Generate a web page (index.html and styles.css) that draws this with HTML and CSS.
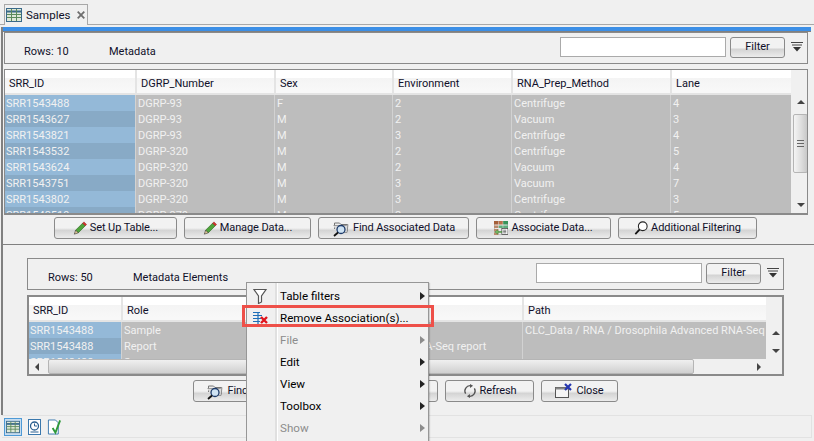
FILE: index.html
```html
<!DOCTYPE html>
<html lang="en">
<head>
<meta charset="utf-8">
<title>Samples</title>
<link rel="stylesheet" href="styles.css">
</head>
<body>
<svg class="defs" width="0" height="0" aria-hidden="true">
  <defs>
    <symbol id="pencil" viewBox="0 0 16 16">
      <path d="M3 10.500 11 2.500l3 3-8 8z" fill="#4fa53a" stroke="#2c6b22" stroke-width=".8"/>
      <path d="M11 2.500l1.500-1.500 3 3L14 5.500z" fill="#d8322a" stroke="#8b1f1a" stroke-width=".6"/>
      <path d="M3 10.500 1.500 15 6 13.500z" fill="#e9cf9c" stroke="#333" stroke-width=".7"/>
    </symbol>
    <symbol id="findfolder" viewBox="0 0 18 18">
      <path d="M2.500 10V4h5l1.500 1.500h6.500V12H11" fill="#eeeeee" stroke="#777"/>
      <path d="M1.500 6.500h13l1.500-1-1 8H5" fill="#dcdcdc" stroke="#888" stroke-width=".8"/>
      <circle cx="9" cy="10.500" r="4" fill="#cfe3f3" stroke="#1d3b6a" stroke-width="1.300"/>
      <path d="M6 13.500 2 17" stroke="#111" stroke-width="1.800"/>
    </symbol>
    <symbol id="assoc" viewBox="0 0 16 16">
      <rect x="0" y="0" width="16" height="16" fill="#e8e8e8" stroke="#666" stroke-width=".6"/>
      <path d="M0 0h5v4H0z" fill="#a5603a"/><path d="M5.500 0H10v4H5.500z" fill="#b8704a"/><path d="M10.500 0H16v4h-5.500z" fill="#39935a"/>
      <path d="M0 5h5v3H0zM0 9h5v3H0zM0 13h5v3H0z" fill="#b98a6c"/><path d="M5.500 5H10v3H5.500zM10.500 5H16v3h-5.500z" fill="#5fae7d"/>
      <rect x="9" y="8.500" width="7" height="7" fill="#fff" stroke="#333" stroke-width=".8"/>
      <path d="M10.500 10.500h3.500M10.500 12h3.500M10.500 13.500h3.500" stroke="#333" stroke-width=".7"/>
      <path d="M9 12H4.500V10L1 12.500 4.500 15v-2H9z" fill="#7cc36b" stroke="#3a7a30" stroke-width=".6"/>
    </symbol>
    <symbol id="lens" viewBox="0 0 16 16">
      <circle cx="10" cy="6" r="5" fill="#fff" stroke="#222" stroke-width="1.200"/>
      <path d="M6.500 9.500 1.500 15" stroke="#111" stroke-width="2"/>
    </symbol>
    <symbol id="refresh" viewBox="0 0 16 16">
      <path d="M3 11A6 6 0 0 1 9 2" fill="none" stroke="#555" stroke-width="1.500"/>
      <path d="M13 5A6 6 0 0 1 7 14" fill="none" stroke="#555" stroke-width="1.500"/>
      <path d="M8 0l3.500 2L8 4.500zM8 11.500 4.500 14 8 16z" fill="#555"/>
    </symbol>
    <symbol id="closewin" viewBox="0 0 18 16">
      <rect x=".5" y="4.500" width="13" height="10" fill="#f4f4f4" stroke="#555"/>
      <path d="M.5 4.500h13v2H.5z" fill="#888"/>
      <path d="M10 1l6 6M16 1l-6 6" stroke="#2536b0" stroke-width="2.200"/>
    </symbol>
    <symbol id="filtermenu" viewBox="0 0 12 10">
      <path d="M0 .5h12M1 3h10" stroke="#444" stroke-width="1"/>
      <path d="M2 5h8L6 9.500z" fill="#333"/>
    </symbol>
    <symbol id="tableicon" viewBox="0 0 16 14">
      <rect x=".5" y=".5" width="15" height="13" fill="#dfe8d8" stroke="#3a6a8a"/>
      <path d="M.5 3.500h15" stroke="#3a6a8a" stroke-width="2"/>
      <path d="M5.500 1v12M10.500 1v12M1 6.500h14M1 9.500h14" stroke="#5b8a5b"/>
    </symbol>
  </defs>
</svg>

<div class="tabstrip">
  <div class="tab">
    <svg class="ic-tab"><use href="#tableicon"/></svg>
    <span>Samples</span>
    <svg class="tab-x" viewBox="0 0 8 8"><path d="M.7.7l6.600 6.600M7.300.7.700 7.300" stroke="#6e6e6e" stroke-width="1.800"/></svg>
  </div>
</div>

<div class="panel">
  <div class="bluebar"></div>

  <section class="upper">
    <div class="headbox">
      <span class="rows">Rows: 10</span>
      <span class="meta">Metadata</span>
      <input class="filter-input" type="text">
      <button class="fbtn">Filter</button>
      <svg class="fmenu"><use href="#filtermenu"/></svg>
    </div>
    <div class="tablebox top-table">
      <div class="grid-area">
        <div class="row head"><div>SRR_ID</div><div>DGRP_Number</div><div>Sex</div><div>Environment</div><div>RNA_Prep_Method</div><div>Lane</div></div>
        <div class="row"><div>SRR1543488</div><div>DGRP-93</div><div>F</div><div>2</div><div>Centrifuge</div><div>4</div></div>
        <div class="row alt"><div>SRR1543627</div><div>DGRP-93</div><div>M</div><div>2</div><div>Vacuum</div><div>3</div></div>
        <div class="row"><div>SRR1543821</div><div>DGRP-93</div><div>M</div><div>3</div><div>Centrifuge</div><div>4</div></div>
        <div class="row alt"><div>SRR1543532</div><div>DGRP-320</div><div>M</div><div>2</div><div>Centrifuge</div><div>5</div></div>
        <div class="row"><div>SRR1543624</div><div>DGRP-320</div><div>M</div><div>2</div><div>Vacuum</div><div>4</div></div>
        <div class="row alt"><div>SRR1543751</div><div>DGRP-320</div><div>M</div><div>3</div><div>Vacuum</div><div>7</div></div>
        <div class="row"><div>SRR1543802</div><div>DGRP-320</div><div>M</div><div>3</div><div>Centrifuge</div><div>3</div></div>
        <div class="row alt"><div>SRR1543519</div><div>DGRP-370</div><div>M</div><div>2</div><div>Centrifuge</div><div>5</div></div>
      </div>
      <div class="vscroll">
        <span class="arrow up"></span>
        <span class="thumb"><i></i></span>
        <span class="arrow down"></span>
      </div>
    </div>
  </section>

  <div class="btnrow upper-btns">
    <button class="btn w1"><svg class="ic"><use href="#pencil"/></svg>Set Up Table...</button>
    <button class="btn w2"><svg class="ic"><use href="#pencil"/></svg>Manage Data...</button>
    <button class="btn w3"><svg class="ic ic-lg"><use href="#findfolder"/></svg>Find Associated Data</button>
    <button class="btn w4"><svg class="ic"><use href="#assoc"/></svg>Associate Data...</button>
    <button class="btn w5"><svg class="ic"><use href="#lens"/></svg>Additional Filtering</button>
  </div>

  <div class="separator"></div>

  <section class="lower">
    <div class="headbox lower-head">
      <span class="rows">Rows: 50</span>
      <span class="meta">Metadata Elements</span>
      <input class="filter-input" type="text">
      <button class="fbtn">Filter</button>
      <svg class="fmenu"><use href="#filtermenu"/></svg>
    </div>
    <div class="tablebox low-table">
      <div class="low-main">
        <div class="grid-area low-grid">
          <div class="row head"><div>SRR_ID</div><div>Role</div><div>Name</div><div>Path</div></div>
          <div class="row"><div>SRR1543488</div><div>Sample</div><div></div><div>CLC_Data / RNA / Drosophila Advanced RNA-Seq / Samples</div></div>
          <div class="row alt"><div>SRR1543488</div><div>Report</div><div>Drosophila Advanced RNA-Seq report</div><div></div></div>
          <div class="row"><div>SRR1543488</div><div>Sequence</div><div></div><div></div></div>
        </div>
        <div class="vscroll low-v">
          <span class="arrow up"></span>
          <span class="arrow down"></span>
        </div>
      </div>
      <div class="hscroll">
        <span class="arrow left"></span>
        <span class="hthumb"></span>
        <span class="arrow right"></span>
      </div>
    </div>
  </section>

  <div class="btnrow lower-btns">
    <button class="btn w6"><svg class="ic ic-lg"><use href="#findfolder"/></svg>Find Associated Data</button>
    <button class="btn w7">Remove</button>
    <button class="btn w8"><svg class="ic"><use href="#refresh"/></svg>Refresh</button>
    <button class="btn w9"><svg class="ic ic-wide"><use href="#closewin"/></svg>Close</button>
  </div>
</div>

<footer class="viewbar">
  <span class="vb-btn active"><svg class="vb-ic"><use href="#tableicon"/></svg></span>
  <svg class="vb-ic" viewBox="0 0 14 16"><rect x="1" y=".5" width="12" height="15" fill="#fff" stroke="#3a78ad"/><circle cx="7" cy="7" r="4" fill="none" stroke="#2a5f8f" stroke-width="1.300"/><path d="M7 4.500V7h2.500M3 13h8" stroke="#2a5f8f" fill="none"/></svg>
  <svg class="vb-ic" viewBox="0 0 16 16"><path d="M1.500.5H9l3 3V15.500H1.500z" fill="#fff" stroke="#3a78ad"/><path d="M6 9l3 5 5-13" fill="none" stroke="#2f9a3a" stroke-width="2"/></svg>
</footer>

<div class="menu">
  <div class="menu-item"><svg class="mi-ic" viewBox="0 0 16 16"><path d="M2 1.500h12L9.500 8v6l-3 1.500V8z" fill="#fff" stroke="#555" stroke-width="1.200"/></svg><span>Table filters</span><b class="sub"></b></div>
  <div class="menu-item"><svg class="mi-ic" viewBox="0 0 16 16"><path d="M1 2.500h7M1 5.500h9M1 8.500h8M1 11.500h7M1 14.500h7M6 2v13" stroke="#1f6fb8" stroke-width="1.200" fill="none"/><path d="M9 7l6 6M15 7l-6 6" stroke="#e0141c" stroke-width="2.400"/></svg><span>Remove Association(s)...</span></div>
  <div class="menu-item off"><i class="mi-ic"></i><span>File</span><b class="sub"></b></div>
  <div class="menu-item"><i class="mi-ic"></i><span>Edit</span><b class="sub"></b></div>
  <div class="menu-item"><i class="mi-ic"></i><span>View</span><b class="sub"></b></div>
  <div class="menu-item"><i class="mi-ic"></i><span>Toolbox</span><b class="sub"></b></div>
  <div class="menu-item off"><i class="mi-ic"></i><span>Show</span><b class="sub"></b></div>
</div>
<div class="highlight"></div>
</body>
</html>
```

FILE: styles.css
```css
* { box-sizing: border-box; }
html, body { margin: 0; height: 441px; overflow: hidden; }
body {
  position: relative;
  background: #f0f0f0;
  font-family: Roboto, "Noto Sans", sans-serif;
  font-size: 11px;
  line-height: 16px;
  color: #10102a;
}
.defs { position: absolute; }

.tabstrip { height: 25px; padding: 4px 0 0 4px; border-bottom: 1px solid #a8a8a8; }
.tab {
  width: 84px; height: 21px; display: flex; align-items: center; padding: 0 0 1px 1px;
  border: 1px solid #a8a8a8; border-bottom: 0; background: #f0f0f0; font-size: 11.500px;
}
.ic-tab { width: 16px; height: 14px; margin-right: 4px; flex: none; }
.tab-x { width: 8px; height: 8px; margin-left: 7px; flex: none; }

.panel { margin: 2px 0 0 1px; width: 810px; height: 388px; border-left: 2px solid #808080; }
.bluebar { height: 5px; background: #3c8fe6; border-bottom: 1px solid #808080; border-top: 1px solid #3c8fe6; }
.upper { margin-left: 1px; width: 804px; }

.headbox {
  height: 32px; display: flex; align-items: center; padding: 7px 0 0 19px;
  border: 1px solid #8a8a8a; background: #f0f0f0;
}
.rows { width: 85px; }
.meta { flex: 1; }
.filter-input { width: 166px; height: 20px; margin: -9px 0 0; border: 1px solid #aaa; background: #fff; padding: 0; }
.fbtn {
  width: 55px; height: 21px; margin: -9px 0 0 4px; padding: 0; font: inherit; color: inherit;
  border: 1px solid #8a8a8a; border-radius: 3px; background: linear-gradient(#f2f2f2 50%, #d4d4d4 60%, #ececec);
}
.fmenu { width: 12px; height: 10px; margin: -9px 4px 0 6px; flex: none; }

.tablebox { background: #f0f0f0; border: 1px solid #8a8a8a; border-bottom-width: 2px; }
.top-table { margin-top: 5px; height: 146px; display: flex; overflow: hidden; }
.grid-area { width: 786px; overflow: hidden; flex: none; }
.top-table .row { grid-template-columns: 130px 139px 118px 119px 159px 121px; }
.row { display: grid; height: 16px; }
.row > div {
  background: #bdbdbd; color: #f1f1f1; padding: 1px 0 0 2px; white-space: nowrap; overflow: hidden;
  border-left: 1px solid #d2d2d2; line-height: 15px;
}
.row > div:first-child { background: #94b9d8; border-left: 0; padding-left: 1px; }
.row.alt > div:first-child { background: #88aac6; }
.row.head { height: 25px; }
.row.head > div, .row.head > div:first-child {
  background: linear-gradient(#fff 35%, #f4f4f4 35%, #f8f8f8 90%);
  color: #10102a; padding: 6px 0 0 4px; border-left: 2px solid #e4e4e4; border-bottom: 2px solid #e4e4e4;
}
.row.head > div:first-child { border-left: 0; }

.vscroll { flex: 1; position: relative; background: #f0f0f0; }
.arrow { position: absolute; width: 0; height: 0; border: 4px solid transparent; }
.arrow.up { left: 6px; top: 30px; border-bottom-color: #444; border-top-width: 0; }
.arrow.down { left: 6px; bottom: 6px; border-top-color: #444; border-bottom-width: 0; }
.thumb {
  position: absolute; left: 2px; top: 44px; width: 15px; height: 59px;
  border: 1px solid #b5b5b5; border-radius: 2px;
  background: linear-gradient(90deg, #f4f4f4, #dcdcdc 60%, #c8c8c8);
  display: flex; align-items: center; justify-content: center;
}
.thumb i { width: 7px; height: 7px; border-top: 1px solid #666; border-bottom: 1px solid #666; background: linear-gradient(transparent 40%, #666 40%, #666 60%, transparent 60%); }

.btnrow { display: flex; gap: 7px; height: 22px; }
.upper-btns { margin-top: 2px; padding-left: 51px; }
.btn {
  height: 22px; padding: 0; display: flex; align-items: center; justify-content: center; gap: 3px;
  font: inherit; color: inherit; white-space: nowrap; letter-spacing: -.1px;
  border: 1px solid #8a8a8a; border-radius: 3px;
  background: linear-gradient(#f2f2f2 50%, #d4d4d4 62%, #ececec);
}
.ic { width: 14px; height: 14px; flex: none; }
.ic-lg { width: 18px; height: 18px; }
.ic-wide { width: 18px; height: 16px; }
.w1 { width: 123px; } .w2 { width: 127px; } .w3 { width: 151px; } .w4 { width: 135px; } .w5 { width: 139px; }
.separator { height: 2px; margin: 5px 0 0; border-top: 1px solid #808080; width: 812px; }

.lower { margin: 12px 0 0 24px; width: 757px; }
.lower-head { padding-left: 20px; }
.low-table { margin-top: 5px; height: 81px; border-width: 2px; overflow: hidden; }
.low-main { display: flex; height: 62px; overflow: hidden; }
.low-grid { width: 737px; }
.low-grid .row { grid-template-columns: 92px 180px 221px 244px; }
.low-v .arrow.up { top: 34px; }
.hscroll { height: 15px; position: relative; background: #f0f0f0; }
.hthumb {
  position: absolute; left: 19px; top: 0; width: 646px; height: 15px;
  border: 1px solid #b5b5b5; border-radius: 2px; background: linear-gradient(#f0f0f0, #cfcfcf);
}
.arrow.left { left: 6px; top: 4px; border-right-color: #444; border-left-width: 0; }
.arrow.right { right: 21px; top: 4px; border-left-color: #444; border-right-width: 0; }

.lower-btns { margin-top: 4px; padding-left: 190px; }
.w6 { width: 150px; } .w7 { width: 88px; } .w8 { width: 89px; } .w9 { width: 77px; }

.viewbar {
  margin: 0 0 0 2px; width: 810px; height: 23px; display: flex; align-items: center; gap: 5px; padding-left: 2px;
  border-top: 1px solid #e2e2e2; border-bottom: 1px solid #e2e2e2; border-right: 1px solid #e2e2e2;
}
.vb-btn { display: flex; align-items: center; justify-content: center; width: 18px; height: 18px; background: #c7ddf0; border: 1px solid #4e9ad6; }
.vb-ic { width: 14px; height: 14px; flex: none; }
.viewbar > .vb-ic { width: 15px; height: 16px; }

.menu {
  position: absolute; left: 246px; top: 282px; width: 183px; height: 170px; padding-top: 2px;
  background: #f0f0f0; border: 1px solid #979797; font-size: 11.600px;
  box-shadow: 1px 1px 1px rgba(0,0,0,.15);
}
.menu::before { content: ""; position: absolute; left: 28px; top: 0; bottom: 0; width: 2px; background: #e0e0e0; border-right: 1px solid #fff; }
.menu-item { height: 22px; display: flex; align-items: center; position: relative; color: #000; }
.menu-item.off { color: #8c8c8c; }
.mi-ic { width: 16px; height: 16px; margin: 0 12px 0 5px; flex: none; display: block; }
.sub { position: absolute; right: 3px; top: 7px; border: 4px solid transparent; border-left: 5px solid #222; border-right-width: 0; }
.off .sub { border-left-color: #8c8c8c; }

.highlight { position: absolute; left: 242px; top: 305px; width: 192px; height: 22px; border: 3px solid #ee5049; }
```
